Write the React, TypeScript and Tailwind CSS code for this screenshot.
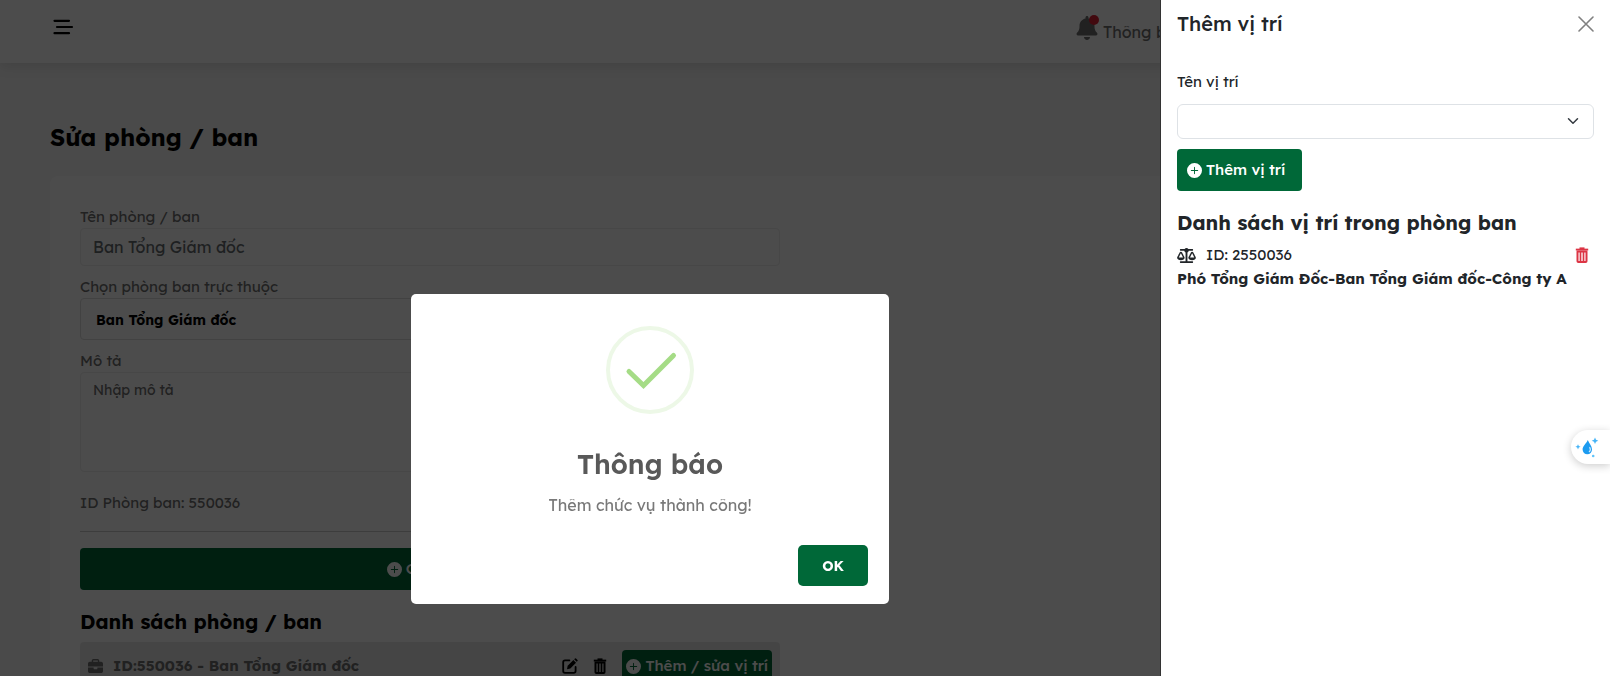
import { useState } from "react";
import type { ReactNode } from "react";
import { BsPlusCircleFill } from "react-icons/bs";
import { FaBell, FaBriefcase } from "react-icons/fa6";
import { FaBalanceScale } from "react-icons/fa";

const departments = [{ id: "550036", name: "Ban Tổng Giám đốc" }];
const positions = [
  { id: "2550036", name: "Phó Tổng Giám Đốc-Ban Tổng Giám đốc-Công ty A" },
];

function TrashIcon() {
  return (
    <svg viewBox="0 0 16 16" className="size-4" fill="none" stroke="currentColor" aria-hidden="true">
      <path d="M5.5 1.2h5" strokeWidth="1.6" />
      <path d="M1.8 2.6h12.4" strokeWidth="1.9" />
      <path d="M3.5 4.6v9.6q0 .8.8.8h7.4q.8 0 .8-.8V4.6z" strokeWidth="2" strokeLinejoin="round" />
      <path d="M6.500 5v9M9.500 5v9" strokeWidth="1.700" />
    </svg>
  );
}

function EditIcon() {
  return (
    <svg viewBox="0 0 16 16" className="size-4" fill="none" stroke="currentColor" aria-hidden="true">
      <path d="M7.4 2.4H3Q1.2 2.4 1.2 4.2V13Q1.2 14.8 3 14.8h8.8q1.8 0 1.8-1.8V9" strokeWidth="1.8" strokeLinecap="round" />
      <path d="M5 11.2l.7-3.4 5.7-5.7 2.6 2.6-5.7 5.7z" fill="currentColor" stroke="none" />
      <path d="M12.2 1.3l.8-.8q.5-.4 1 0l1.5 1.5q.5.5 0 1l-.8.8z" fill="currentColor" stroke="none" />
    </svg>
  );
}

function TopBar() {
  return (
    <header className="relative flex h-[63px] items-center justify-between bg-white px-[50px] shadow-[0_4px_12px_rgba(0,0,0,0.1)]">
      <button type="button" aria-label="Menu" className="mb-[10px] text-black">
        <svg viewBox="0 0 24 24" className="size-6" fill="none" stroke="currentColor" strokeWidth="2.2" strokeLinecap="round">
          <path d="M4.5 5.8H19M7 12h15M4.5 18.2H19" />
        </svg>
      </button>
      <a href="#notifications" className="mr-[374px] flex items-center gap-1 text-[#6f6f6f]">
        <span className="relative mb-2">
          <FaBell className="size-6" />
          <span className="absolute -top-px right-0 size-[10px] rounded-full bg-[#dc1f35]" />
        </span>
        <span className="whitespace-nowrap text-base">Thông báo</span>
      </a>
    </header>
  );
}

function Field({ label, htmlFor, children }: { label: string; htmlFor: string; children: ReactNode }) {
  return (
    <div className="flex flex-col">
      <label htmlFor={htmlFor} className="h-[22px] text-[15px] leading-[22px]">
        {label}
      </label>
      {children}
    </div>
  );
}

function DepartmentPage() {
  return (
    <main className="px-[50px] pt-[56px]">
      <h1 className="text-2xl font-bold leading-9 text-black">Sửa phòng / ban</h1>
      <section className="mt-[21px] grid min-h-[560px] grid-cols-2 gap-[50px] rounded-lg bg-white p-[30px] text-[#6f6f6f]">
        <div>
          <form className="flex flex-col gap-[10px]">
            <Field label="Tên phòng / ban" htmlFor="dept-name">
              <input
                id="dept-name"
                defaultValue="Ban Tổng Giám đốc"
                className="h-[38px] rounded border border-[#eeeeee] px-3 text-base text-[#666b70]"
              />
            </Field>
            <Field label="Chọn phòng ban trực thuộc" htmlFor="dept-parent">
              <select
                id="dept-parent"
                className="h-[42px] appearance-none rounded border border-[#dddddd] px-[15px] pt-[2px] text-sm font-bold text-black"
              >
                <option>Ban Tổng Giám đốc</option>
              </select>
            </Field>
            <Field label="Mô tả" htmlFor="dept-note">
              <textarea
                id="dept-note"
                placeholder="Nhập mô tả"
                className="h-[100px] resize-none rounded border border-[#eeeeee] px-3 py-[7px] text-sm placeholder:text-[#6f6f6f]"
              />
            </Field>
          </form>
          <p className="mt-5 text-[15px] leading-[22px]">ID Phòng ban: 550036</p>
          <hr className="mt-[17px] border-[#cccccc]" />
          <button
            type="button"
            className="mt-4 flex h-[42px] w-full items-center justify-center gap-1 rounded bg-[#006838] text-[15px] font-medium text-white"
          >
            <BsPlusCircleFill />
            Cập nhật
          </button>
          <h2 className="mt-[18px] text-xl font-bold leading-7 text-black">Danh sách phòng / ban</h2>
          <ul className="mt-[6px]">
            {departments.map((d) => (
              <li key={d.id} className="flex items-center rounded bg-[#e8e8e8] p-2">
                <FaBriefcase className="size-[15px]" />
                <span className="ml-[10px] flex-1 text-[15px] font-bold">
                  ID:{d.id} - {d.name}
                </span>
                <button type="button" aria-label="Sửa" className="mr-[14px] text-black">
                  <EditIcon />
                </button>
                <button type="button" aria-label="Xóa" className="mr-[14px] text-black">
                  <TrashIcon />
                </button>
                <button
                  type="button"
                  className="flex h-8 items-center gap-1 rounded bg-[#006838] px-1 text-[15px] font-medium text-white"
                >
                  <BsPlusCircleFill />
                  Thêm / sửa vị trí
                </button>
              </li>
            ))}
          </ul>
        </div>
      </section>
    </main>
  );
}

function PositionDrawer() {
  return (
    <aside className="fixed inset-y-0 right-0 w-[450px] overflow-hidden border-l border-[#333333] bg-white px-4 text-[#212529]">
      <div className="flex h-12 items-center justify-between">
        <h2 className="text-xl font-medium">Thêm vị trí</h2>
        <button type="button" aria-label="Đóng" className="text-[#808080]">
          <svg viewBox="0 0 16 16" className="size-4" fill="none" stroke="currentColor" strokeWidth="1.6" strokeLinecap="round">
            <path d="M1 1l14 14M15 1L1 15" />
          </svg>
        </button>
      </div>
      <label htmlFor="position" className="mt-[22px] block text-[15px] leading-6">
        Tên vị trí
      </label>
      <div className="relative mt-[10px]">
        <select id="position" className="block h-[35px] w-full appearance-none rounded-md border border-[#dee2e6] bg-white px-3" />
        <svg
          viewBox="0 0 16 16"
          className="pointer-events-none absolute right-[15px] top-[11px] size-3"
          fill="none"
          stroke="#343a40"
          strokeWidth="2"
          strokeLinecap="round"
          strokeLinejoin="round"
        >
          <path d="m2 5 6 6 6-6" />
        </svg>
      </div>
      <button
        type="button"
        className="mt-[10px] flex h-[42px] items-center gap-1 rounded bg-[#006838] pl-[10px] pr-[17px] text-[15px] font-medium text-white"
      >
        <BsPlusCircleFill />
        Thêm vị trí
      </button>
      <h3 className="mt-[18px] text-xl font-bold leading-7">Danh sách vị trí trong phòng ban</h3>
      <ul className="mt-[6px] text-[15px] leading-6">
        {positions.map((p) => (
          <li key={p.id}>
            <div className="flex items-center">
              <FaBalanceScale className="h-[15px] w-[19px]" />
              <span className="ml-[10px] flex-1">ID: {p.id}</span>
              <button type="button" aria-label="Xóa vị trí" className="mr-1 text-[#dc3545]">
                <TrashIcon />
              </button>
            </div>
            <p className="whitespace-nowrap font-bold">{p.name}</p>
          </li>
        ))}
      </ul>
    </aside>
  );
}

function SuccessDialog({ onClose }: { onClose: () => void }) {
  return (
    <div
      role="dialog"
      aria-labelledby="dialog-title"
      className="fixed left-[411px] top-[294px] flex w-[478px] flex-col items-center rounded-[5px] bg-white pt-8"
    >
      <svg viewBox="0 0 88 88" className="size-[88px]" fill="none" aria-hidden="true">
        <circle cx="44" cy="44" r="42" stroke="#edf8e7" strokeWidth="4" />
        <path d="M23 45.500L37.500 59.500L67.500 29.500" stroke="#a5dc86" strokeWidth="5" strokeLinecap="round" />
      </svg>
      <h2 id="dialog-title" className="mt-8 text-[27px] font-semibold leading-9 text-[#595959]">
        Thông báo
      </h2>
      <p className="mt-[11px] text-base leading-6 text-[#797979]">Thêm chức vụ thành công!</p>
      <div className="mt-7 flex w-full justify-end px-[21px] pb-[18px]">
        <button
          type="button"
          onClick={onClose}
          className="h-[41px] w-[70px] rounded-[5px] bg-[#006838] text-sm font-bold text-white"
        >
          OK
        </button>
      </div>
    </div>
  );
}

function AssistantTab() {
  return (
    <button
      type="button"
      aria-label="Trợ lý"
      className="fixed right-0 top-[430px] flex h-[34px] w-[39px] items-center rounded-l-full bg-white pl-1 shadow-[0_2px_8px_rgba(0,0,0,0.2)]"
    >
      <svg viewBox="0 0 24 24" className="size-6" fill="#1c9bf0" aria-hidden="true">
        <path d="M12.8 5C14.2 8.5 17 11 17 14.6A4.6 4.6 0 0 1 7.600 14.600C7.600 11 11 9 12.800 5Z" />
        <path d="M14.800 12.500q1.300 2.700-.500 4.200" fill="none" stroke="#cdeaff" strokeWidth="1.200" strokeLinecap="round" />
        <path d="M20 2.500l1 2.300 2.300 1-2.300 1-1 2.300-1-2.300-2.300-1 2.300-1zM3 9.200l.8 1.800 1.800.8-1.800.8-.8 1.800-.8-1.800-1.800-.8 1.800-.8z" fill="#45b4f7" />
        <circle cx="18.200" cy="21" r="1.300" fill="#62c4fa" />
      </svg>
    </button>
  );
}

export default function App() {
  const [open, setOpen] = useState(true);
  return (
    <div className="h-screen overflow-hidden bg-[#f7f7f7] font-['Lexend','Inter',sans-serif]">
      <TopBar />
      <DepartmentPage />
      <div className="fixed inset-0 bg-black/70" />
      <PositionDrawer />
      {open && <SuccessDialog onClose={() => setOpen(false)} />}
      <AssistantTab />
    </div>
  );
}
